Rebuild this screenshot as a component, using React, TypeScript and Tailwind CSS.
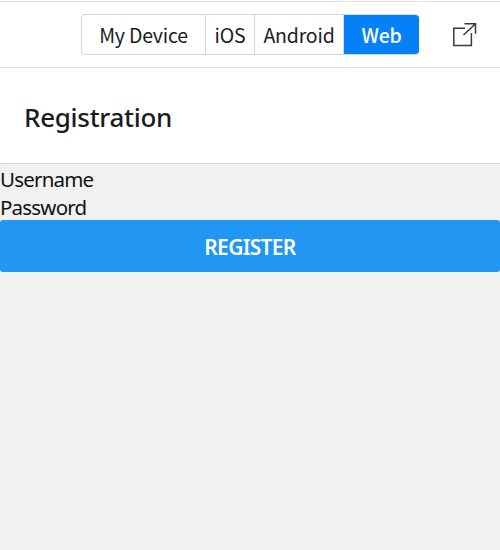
const platforms = [
  { label: 'My Device', box: 'w-[124px]' },
  { label: 'iOS', box: 'w-[49px]' },
  { label: 'Android', box: 'w-[89px]' },
];

export default function App() {
  return (
    <div className="flex h-[550px] w-[500px] flex-col overflow-hidden border-t border-white bg-[#f1f1f1] font-['Noto_Sans',sans-serif] text-[#1c1c1e]">
      <header className="flex h-[67px] items-center border-y border-[#e1e1e3] bg-white pl-[81px]">
        <div className="flex h-[41px] w-[338px] overflow-hidden rounded-[4px] border border-r-0 border-[#d5d5dd] font-['Noto_Sans_CJK_SC','Noto_Sans',sans-serif] text-[19.5px] tracking-[-0.2px]">
          {platforms.map((p) => (
            <button key={p.label} className={`${p.box} flex items-center justify-center border-r border-[#d5d5dd] whitespace-nowrap`}>
              {p.label}
            </button>
          ))}
          <button className="-my-px flex flex-1 items-center justify-center bg-[#0481f6] font-medium text-white">Web</button>
        </div>
        <svg className="ml-[33px]" width="26" height="25" viewBox="0 0 26 25" fill="none" stroke="#3a3a3a" strokeWidth="1.5">
          <path d="M13 6.2H1.8v17.2h17.6V11" />
          <path d="M12.5 1.7h11v10M23.3 2 11.5 13" />
        </svg>
      </header>
      <div className="flex h-24 items-center border-b border-[#d8d8d8] bg-white pt-1 pl-6">
        <h1 className="text-[26px] font-medium tracking-[-0.3px]">Registration</h1>
      </div>
      <div className="pt-px text-[20.5px] leading-7 tracking-[-0.8px] text-[#111]">
        <p>Username</p>
        <p>Password</p>
      </div>
      <button className="-mt-px flex h-[52px] w-full items-center justify-center rounded-[3px] bg-[#2196f3] pt-1 text-[21px] font-semibold tracking-[-0.7px] text-white">REGISTER</button>
    </div>
  );
}
